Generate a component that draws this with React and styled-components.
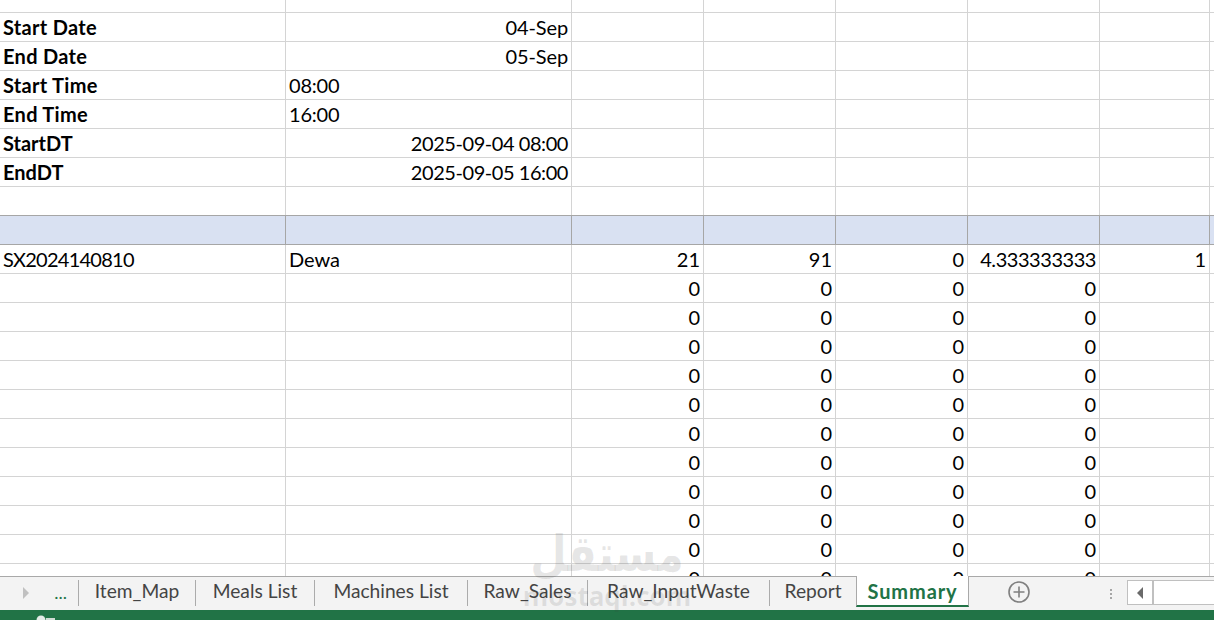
import React from "react";
import styled, { createGlobalStyle } from "styled-components";

const Global = createGlobalStyle`
  html, body { margin: 0; padding: 0; background: #fff; }
  #root { width: 1214px; height: 620px; overflow: hidden; }
`;

const Window = styled.div`
  position: relative;
  display: flex;
  flex-direction: column;
  width: 1214px;
  height: 620px;
  overflow: hidden;
  font-family: Lato, "Liberation Sans", sans-serif;
  color: #000;
`;

const Sheet = styled.div`
  height: 576px;
  flex: none;
  overflow: hidden;
`;

const Row = styled.div`
  display: flex;
  height: ${(p) => (p.$top ? 13 : 29)}px;
  background: ${(p) => (p.$header ? "#d9e1f2" : "#fff")};
  box-shadow: ${(p) => (p.$header ? "0 -1px 0 #a6a6a6" : "none")};
  position: relative;
`;

const Cell = styled.div`
  flex: none;
  box-sizing: border-box;
  width: ${(p) => p.$w}px;
  height: 100%;
  padding: 0 ${(p) => (p.$right ? 3 : 0)}px 0 3px;
  border-right: 1px solid ${(p) => (p.$header ? "#a6a6a6" : "#d4d4d4")};
  border-bottom: 1px solid ${(p) => (p.$header ? "#a6a6a6" : "#d4d4d4")};
  text-align: ${(p) => (p.$right ? "right" : "left")};
  font-size: 20px;
  font-weight: ${(p) => (p.$bold ? 700 : 400)};
  letter-spacing: ${(p) => p.$ls || 0}px;
  line-height: 28px;
  white-space: nowrap;
  overflow: hidden;
`;

const TabBar = styled.div`
  box-sizing: border-box;
  height: 34px;
  flex: none;
  display: flex;
  align-items: flex-start;
  background: #f3f3f3;
  border-top: 1px solid #a9a9a9;
  position: relative;
`;

const NavArea = styled.div`
  flex: none;
  width: 79px;
  height: 26px;
  margin-top: 3px;
  display: flex;
  align-items: center;
  justify-content: space-between;
  padding: 0 11px 0 23px;
  box-sizing: border-box;
  border-right: 1px solid #ababab;
`;

const Arrow = styled.span`
  width: 0;
  height: 0;
  border-top: 6px solid transparent;
  border-bottom: 6px solid transparent;
  border-left: 6px solid #c0c0c0;
`;

const More = styled.span`
  font-size: 18px;
  color: #217346;
  line-height: 20px;
  margin-top: -2px;
`;

const Tab = styled.div`
  flex: none;
  box-sizing: border-box;
  width: ${(p) => p.$w}px;
  height: ${(p) => (p.$active ? 31 : 26)}px;
  margin-top: ${(p) => (p.$active ? -1 : 3)}px;
  margin-left: ${(p) => (p.$active ? -1 : 0)}px;
  text-align: center;
  font-size: ${(p) => (p.$active ? 20 : 19.2)}px;
  letter-spacing: ${(p) => (p.$active ? 0.9 : 0)}px;
  line-height: ${(p) => (p.$active ? 30 : 22)}px;
  white-space: nowrap;
  color: ${(p) => (p.$active ? "#217346" : "#444")};
  font-weight: ${(p) => (p.$active ? 700 : 400)};
  background: ${(p) => (p.$active ? "#fff" : "transparent")};
  border-right: 1px solid ${(p) => (p.$active ? "#a9a9a9" : p.$last ? "transparent" : "#ababab")};
  border-left: ${(p) => (p.$active ? "1px solid #a9a9a9" : "none")};
  border-bottom: ${(p) => (p.$active ? "2px solid #217346" : "none")};
`;

const AddButton = styled.div`
  flex: none;
  margin: 4px 0 0 39px;
  width: 22px;
  height: 22px;
  color: #808080;
  display: flex;
`;

const Grip = styled.div`
  flex: none;
  margin: 12px 0 0 80px;
  width: 2px;
  height: 10px;
  background: repeating-linear-gradient(to bottom, #a6a6a6 0 2px, transparent 2px 4px);
`;

const ScrollBar = styled.div`
  flex: none;
  display: flex;
  margin: 3px 0 0 15px;
  height: 25px;
  width: 90px;
  box-sizing: border-box;
  background: #fff;
  border: 1px solid #c0c0c0;
  border-right: none;
`;

const ScrollLeft = styled.div`
  flex: none;
  box-sizing: border-box;
  width: 26px;
  height: 100%;
  border-right: 2px solid #c0c0c0;
  display: flex;
  align-items: center;
  justify-content: center;
`;

const LeftArrow = styled.span`
  width: 0;
  height: 0;
  border-top: 6px solid transparent;
  border-bottom: 6px solid transparent;
  border-right: 6px solid #6a6a6a;
`;

const StatusBar = styled.div`
  flex: none;
  height: 10px;
  background: #217346;
  position: relative;
  overflow: hidden;
  padding-left: 35px;
  display: flex;
`;

const StatusIcon = styled.svg`
  width: 22px;
  height: 10px;
  flex: none;
`;

const Watermark = styled.div`
  position: absolute;
  left: 500px;
  top: 524px;
  width: 214px;
  text-align: center;
  color: rgba(60, 60, 60, 0.12);
  pointer-events: none;
`;

const WatermarkArabic = styled.div`
  font-family: "DejaVu Sans", sans-serif;
  font-weight: 700;
  font-size: 50px;
  line-height: 60px;
  transform: scaleX(0.84);
`;

const WatermarkLatin = styled.div`
  font-family: "Open Sans", sans-serif;
  font-weight: 700;
  font-size: 26px;
  line-height: 24px;
`;

const widths = [286, 286, 132, 132, 132, 132, 110, 100];

const tabs = [
  ["Item_Map", 117],
  ["Meals List", 119],
  ["Machines List", 153],
  ["Raw_Sales", 120],
  ["Raw_InputWaste", 182],
  ["Report", 87],
];

const info = [
  { label: "Start Date", labelLs: 0.3, value: "04-Sep", right: true, ls: -0.1 },
  { label: "End Date", labelLs: 0.3, value: "05-Sep", right: true, ls: -0.1 },
  { label: "Start Time", labelLs: 0.3, value: "08:00", ls: -0.2 },
  { label: "End Time", labelLs: 0.3, value: "16:00", ls: -0.2 },
  { label: "StartDT", value: "2025-09-04 08:00", right: true, ls: -0.44 },
  { label: "EndDT", value: "2025-09-05 16:00", right: true, ls: -0.44 },
];

const dataRows = [
  { id: "SX2024140810", name: "Dewa", values: ["21", "91", "0", "4.333333333", "1"] },
  ...Array.from({ length: 11 }, () => ({ id: "", name: "", values: ["0", "0", "0", "0", ""] })),
];

export default function App() {
  return (
    <Window>
      <Global />
      <Sheet>
        <Row $top>{widths.map((w, i) => <Cell key={i} $w={w} />)}</Row>
        {info.map((r) => (
          <Row key={r.label}>
            <Cell $w={widths[0]} $bold $ls={r.labelLs}>{r.label}</Cell>
            <Cell $w={widths[1]} $right={r.right} $ls={r.ls}>{r.value}</Cell>
            {widths.slice(2).map((w, i) => <Cell key={i} $w={w} />)}
          </Row>
        ))}
        <Row>{widths.map((w, i) => <Cell key={i} $w={w} />)}</Row>
        <Row $header>{widths.map((w, i) => <Cell key={i} $w={w} $header />)}</Row>
        {dataRows.map((r, ri) => (
          <Row key={ri}>
            <Cell $w={widths[0]} $ls={-0.75}>{r.id}</Cell>
            <Cell $w={widths[1]}>{r.name}</Cell>
            {r.values.map((v, i) => (
              <Cell key={i} $w={widths[i + 2]} $right $ls={v.length > 2 ? -0.45 : 0}>{v}</Cell>
            ))}
            <Cell $w={widths[7]} />
          </Row>
        ))}
      </Sheet>
      <TabBar>
        <NavArea><Arrow /><More>...</More></NavArea>
        {tabs.map(([name, w]) => (
          <Tab key={name} $w={w} $last={name === "Report"}>{name}</Tab>
        ))}
        <Tab $w={113} $active>Summary</Tab>
        <AddButton>
          <svg viewBox="0 0 22 22" width="22" height="22" fill="none" stroke="currentColor" strokeWidth="1.6">
            <circle cx="11" cy="11" r="10" />
            <path d="M11 5.5v11M5.5 11h11" />
          </svg>
        </AddButton>
        <Grip />
        <ScrollBar><ScrollLeft><LeftArrow /></ScrollLeft></ScrollBar>
      </TabBar>
      <StatusBar>
        <StatusIcon viewBox="0 0 22 10">
          <circle cx="6" cy="10" r="4.5" fill="#e3ebe6" />
          <rect x="11" y="8" width="9" height="2" fill="#cfdcd4" />
        </StatusIcon>
      </StatusBar>
      <Watermark>
        <WatermarkArabic>مستقل</WatermarkArabic>
        <WatermarkLatin>mostaql.com</WatermarkLatin>
      </Watermark>
    </Window>
  );
}
